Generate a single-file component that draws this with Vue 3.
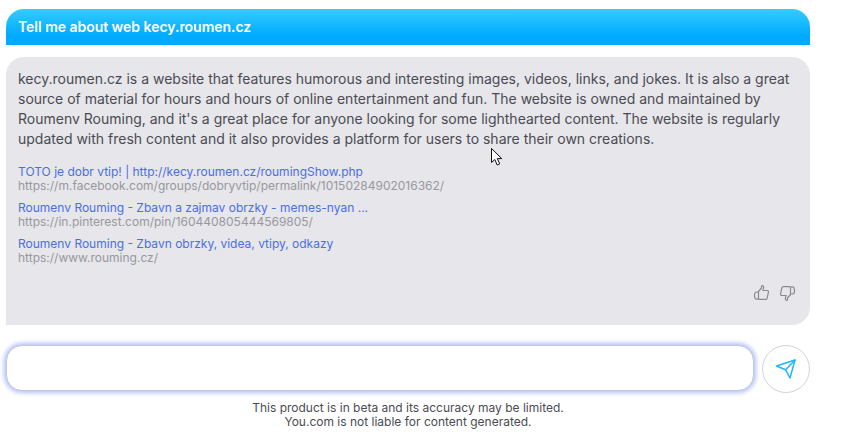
<template>
  <div class="chat">
    <div class="question">Tell me about web kecy.roumen.cz</div>
    <div class="answer">
      <p class="text">
        kecy.roumen.cz is a website that features humorous and interesting images, videos, links, and jokes. It is also a great source of material for hours and hours of online entertainment and fun. The website is owned and maintained by Roumenv Rouming, and it's a great place for anyone looking for some lighthearted content. The website is regularly updated with fresh content and it also provides a platform for users to share their own creations.
      </p>
      <div class="sources">
        <div v-for="source in sources" :key="source.url" class="source">
          <div class="source-title">{{ source.title }}</div>
          <div class="source-url">{{ source.url }}</div>
        </div>
      </div>
      <div class="votes">
        <svg width="18" height="18" viewBox="0 0 18 18" fill="none" stroke="#8a8a8e" stroke-width="1.2" stroke-linejoin="round">
          <path d="M5.500 7.500 8.500 4V2.200c0-.8 1.800-.8 2.100.6.2 1-.3 2.600-.8 3.700h4.400c1 0 1.500.9 1.200 1.800l-1.300 6c-.2.7-.7 1.100-1.400 1.100H6.800c-.7 0-1.300-.3-1.300-1z" />
          <path d="M5.500 8H3.700C2.500 8 1.500 9.200 1.500 11.300s.9 3.800 2.200 3.800h1.800" />
        </svg>
        <svg width="18" height="18" viewBox="0 0 18 18" fill="none" stroke="#8a8a8e" stroke-width="1.2" stroke-linejoin="round">
          <path d="M12.500 10.500 9.500 14v1.800c0 .8-1.800.8-2.100-.6-.2-1 .3-2.600.8-3.700H3.800c-1 0-1.500-.9-1.200-1.800l1.300-6c.2-.7.7-1.100 1.400-1.100h5.900c.7 0 1.300.3 1.300 1z" />
          <path d="M12.500 10h1.800c1.200 0 2.200-1.200 2.200-3.300s-.9-3.800-2.200-3.800h-1.800" />
        </svg>
      </div>
    </div>
    <div class="composer">
      <input class="prompt" type="text" />
      <button class="send" type="button" aria-label="Send">
        <svg width="22" height="22" viewBox="0 0 22 22" fill="none" stroke="#1fb6ff" stroke-width="1.500" stroke-linejoin="round" stroke-linecap="round">
          <path d="M1.500 8 20 2 15 20 10.600 11.800z" />
          <path d="M10.600 11.800 20 2" />
        </svg>
      </button>
    </div>
    <div class="notice">
      This product is in beta and its accuracy may be limited.<br />
      You.com is not liable for content generated.
    </div>
    <!-- mouse pointer captured in the screenshot -->
    <svg class="pointer" width="14" height="20" viewBox="0 0 14 20">
      <path d="M1.500 1.500v14l3.300-3 2.400 5.500 2.500-1.100-2.400-5.300h4.500z" fill="#fff" stroke="#111" stroke-width="1" stroke-linejoin="round" />
    </svg>
  </div>
</template>

<script setup>
const sources = [
  {
    title: 'TOTO je dobr vtip! | http://kecy.roumen.cz/roumingShow.php',
    url: 'https://m.facebook.com/groups/dobryvtip/permalink/10150284902016362/'
  },
  {
    title: 'Roumenv Rouming - Zbavn a zajmav obrzky - memes-nyan ...',
    url: 'https://in.pinterest.com/pin/160440805444569805/'
  },
  {
    title: 'Roumenv Rouming - Zbavn obrzky, videa, vtipy, odkazy',
    url: 'https://www.rouming.cz/'
  }
]
</script>

<style>
html, body {
  background: #fff;
}
</style>

<style scoped>
.chat {
  position: relative;
  width: 804px;
  height: 438px;
  padding: 9px 0 0 6px;
  font-family: Inter, "Liberation Sans", sans-serif;
}

.question {
  height: 36px;
  line-height: 36px;
  padding: 0 12px;
  border-radius: 18px 18px 0 0;
  background: linear-gradient(180deg, #33ccff 0%, #00aaff 75%);
  color: #fff;
  font-size: 14px;
  font-weight: 600;
  letter-spacing: -0.03px;
}

.answer {
  margin-top: 12px;
  height: 268px;
  box-sizing: border-box;
  padding: 12px 12px 0;
  border-radius: 18px 18px 18px 0;
  background: #e6e6eb;
  display: flex;
  flex-direction: column;
}

.text {
  margin: 0;
  font-size: 14px;
  line-height: 20px;
  color: #4b4b52;
}

.sources {
  margin-top: 16px;
  display: flex;
  flex-direction: column;
  gap: 8px;
}

.source {
  font-size: 12px;
  line-height: 14px;
}

.source-title {
  color: #4a6fe3;
}

.source-url {
  color: #98989d;
}

.votes {
  margin-top: auto;
  margin-bottom: 23px;
  display: flex;
  justify-content: flex-end;
  gap: 7px;
  padding-right: 2px;
}

.composer {
  margin-top: 20px;
  display: flex;
  align-items: flex-start;
  gap: 8px;
}

.prompt {
  flex: 1;
  height: 46px;
  box-sizing: border-box;
  border: 1px solid #c8c8d0;
  border-radius: 16px;
  outline: none;
  background: #fff;
  box-shadow: 0 0 4px 2px #b4c2ff;
}

.send {
  width: 48px;
  height: 48px;
  padding: 0;
  border: 1px solid #d4d4d8;
  border-radius: 50%;
  background: #fff;
  display: flex;
  align-items: center;
  justify-content: center;
}

.notice {
  margin-top: 8px;
  text-align: center;
  font-size: 12px;
  line-height: 14px;
  color: #4b4b52;
}

.pointer {
  position: absolute;
  left: 490px;
  top: 147px;
}
</style>
